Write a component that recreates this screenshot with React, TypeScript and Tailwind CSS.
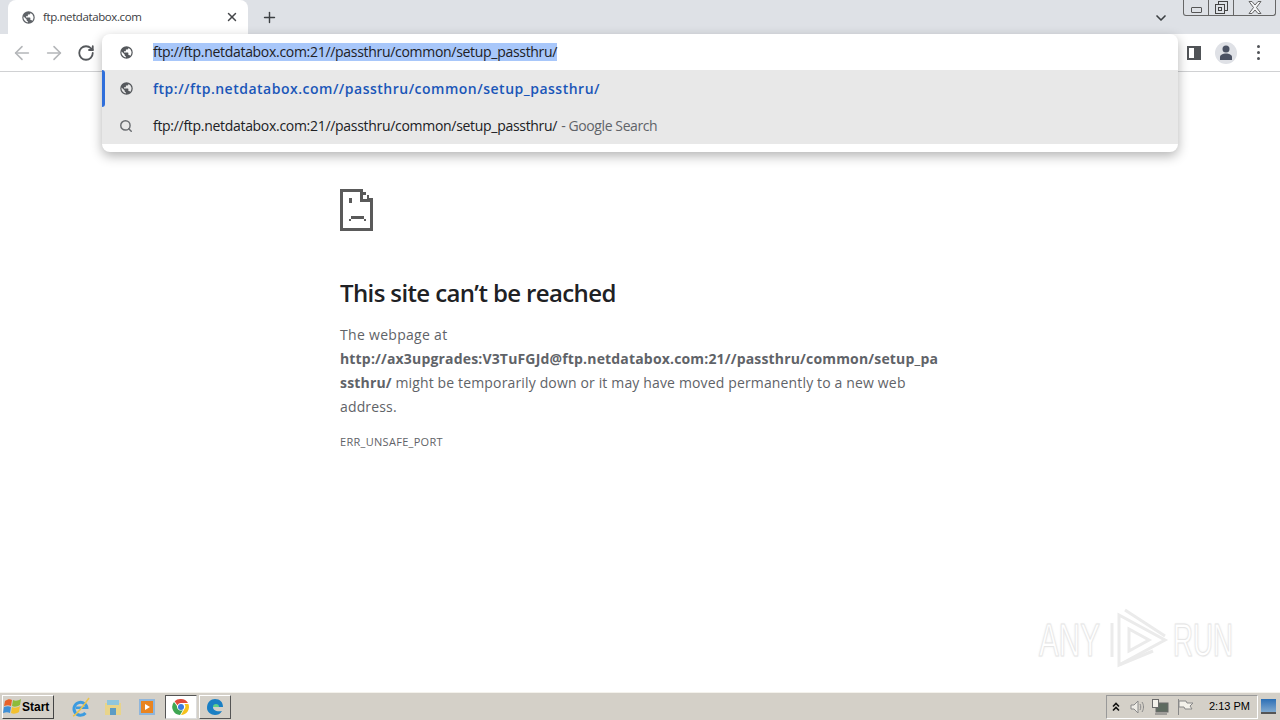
import { ArrowLeft, ArrowRight, RotateCw, Plus, X, ChevronDown, Search } from 'lucide-react';

function GlobeIcon({ className }: { className?: string }) {
  return (
    <svg viewBox="0 0 24 24" className={className} fill="currentColor">
      <path d="M12 2a10 10 0 1 0 0 20 10 10 0 0 0 0-20zm-1 17.900A8 8 0 0 1 4.200 10.200L9 15v1a2 2 0 0 0 2 2v1.900zm6.900-2.500A2 2 0 0 0 16 16h-1v-3a1 1 0 0 0-1-1H8v-2h2a1 1 0 0 0 1-1V7h2a2 2 0 0 0 2-2v-.4a8 8 0 0 1 2.900 12.800z" />
    </svg>
  );
}

function SadPage() {
  return (
    <svg width="33" height="42" viewBox="0 0 33 42" shapeRendering="crispEdges" fill="#5a5a5a">
      <path d="M0 0h20v3H3v36h27V13h3v29H0z" />
      <path d="M20 0h3v3h3v3h3v3h4v4H20zM23 6v4h4V6z" />
      <rect x="9" y="9" width="3" height="5" />
      <rect x="11" y="27" width="13" height="3" />
      <rect x="9" y="30" width="2" height="2" />
      <rect x="24" y="30" width="2" height="2" />
    </svg>
  );
}

function WindowsFlag() {
  return (
    <svg width="18" height="17" viewBox="0 0 18 17">
      <path d="M2 3c3-2 5-2 7-1L8 8C6 7 4 7 1 8z" fill="#e8622a" />
      <path d="M10 2c2 1 5 1 8-1l-1 6c-3 2-6 2-8 1z" fill="#8dbb3a" />
      <path d="M1 9c3-1 5-1 7 0l-1 6c-2-1-4-1-7 0z" fill="#3f8fd6" />
      <path d="M9 9c2 1 5 1 8-1l-1 6c-3 2-6 2-8 1z" fill="#f3c02f" />
    </svg>
  );
}

function TaskIcons() {
  return (
    <div className="flex items-center h-full">
      <svg width="20" height="22" viewBox="0 0 20 22" className="ml-[17px]">
        <path d="M16 13a6.500 6.500 0 1 0-1.500 4" fill="none" stroke="#3c9be0" strokeWidth="3" />
        <rect x="5" y="10.500" width="11" height="2.500" fill="#3c9be0" />
        <path d="M2 20C5 19 13 9 18 2" stroke="#e9c44c" strokeWidth="1.500" fill="none" />
      </svg>
      <svg width="18" height="18" viewBox="0 0 18 18" className="ml-[13px]">
        <rect x="1" y="5" width="16" height="12" fill="#e8d48a" />
        <rect x="3" y="2" width="12" height="5" fill="#8ec6de" />
        <rect x="6" y="10" width="6" height="7" fill="#5c9cc4" />
      </svg>
      <div className="ml-[17px] w-4 h-4 bg-[#8fb6dc] flex items-center justify-center">
        <div className="w-3 h-3 bg-[#e98420] flex items-center justify-center">
          <div className="w-0 h-0 border-y-[3px] border-y-transparent border-l-[5px] border-l-white" />
        </div>
      </div>
      <div className="ml-[10px] w-[32px] h-[24px] bg-white border border-t-[#555] border-l-[#555] border-r-[#ddd] border-b-[#ddd] flex items-center justify-center">
        <svg width="18" height="18" viewBox="0 0 18 18">
          <path d="M9 1a8 8 0 0 1 7 4H9a4 4 0 0 0-3.600 2.200L2.600 3.200A8 8 0 0 1 9 1z" fill="#e04a3a" />
          <path d="M16.400 6A8 8 0 0 1 9 17l3.400-6a4 4 0 0 0 0-5z" fill="#f6c21c" />
          <path d="M2 4a8 8 0 0 0 6 13l3-5a4 4 0 0 1-6-4z" fill="#3fa652" />
          <circle cx="9" cy="9" r="3" fill="#3a7be0" />
        </svg>
      </div>
      <div className="ml-[2px] w-[32px] h-[24px] bg-[#d4d0c8] border border-t-white border-l-white border-r-[#555] border-b-[#555] flex items-center justify-center">
        <svg width="18" height="18" viewBox="0 0 18 18">
          <path d="M1 10C1 4 5 1 9 1c5 0 8 3 8 8H7c0 3 3 5 9 4-2 3-4 4-7 4-4 0-8-3-8-7z" fill="#1a7fc4" />
          <path d="M7 9c0-2 1-3 3-3 2 0 3 1 3 3z" fill="#5fd08a" />
        </svg>
      </div>
    </div>
  );
}

function Tray() {
  return (
    <div className="ml-auto flex items-center h-full">
      <div className="h-[24px] w-[152px] flex items-center border border-t-[#999] border-l-[#999] border-r-white border-b-white">
        <svg width="8" height="10" viewBox="0 0 8 10" className="ml-[5px]" fill="none" stroke="#111" strokeWidth="1.600">
          <path d="M1 4.500L4 1.500l3 3M1 8.500L4 5.500l3 3" />
        </svg>
        <svg width="18" height="18" viewBox="0 0 18 18" className="ml-[9px]" fill="none" stroke="#8a8a8a">
          <path d="M2 7h3l4-4v12l-4-4H2z" fill="#eeece6" />
          <path d="M11 6c1 2 1 4 0 6M13 4c2 3 2 7 0 10" />
        </svg>
        <svg width="20" height="18" viewBox="0 0 20 18" className="ml-[3px]" fill="none" stroke="#6a6a6a">
          <rect x="6" y="5" width="12" height="9" fill="#5e6b60" />
          <rect x="2.500" y="1.500" width="6" height="8" fill="#f3f1ea" />
          <path d="M5 16h12" />
        </svg>
        <svg width="20" height="18" viewBox="0 0 20 18" className="ml-[6px]" fill="#f3f1ea" stroke="#888">
          <path d="M2.500 1v16" fill="none" />
          <path d="M3 3h7l1 2h6l-3 3 2 3h-7L8 9H3z" />
        </svg>
        <span className="ml-[13px] text-[11px] leading-none text-black font-['Liberation_Sans',sans-serif]">2:13 PM</span>
      </div>
      <div className="ml-[3px] mr-[4px] w-[15px] h-[15px] bg-gradient-to-b from-[#2a6fb5] to-[#7fa9cf] border-b-2 border-b-[#555]" />
    </div>
  );
}

function WindowControls() {
  return (
    <div className="flex h-[16px] w-[93px] mr-[4px] self-start bg-[#dee1e6] border border-t-0 border-[#666] rounded-b-[3px]">
      <div className="w-[25px] flex items-center justify-center border-r border-[#666]">
        <div className="w-[11px] h-[6px] mt-[4px] border border-[#555] rounded-[1px]" />
      </div>
      <div className="w-[25px] flex items-center justify-center border-r border-[#666]">
        <svg width="13" height="13" viewBox="0 0 13 13" fill="#dee1e6" stroke="#444">
          <rect x="3.500" y="0.500" width="9" height="9" />
          <rect x="0.500" y="3.500" width="9" height="9" />
          <rect x="3.500" y="6.500" width="3" height="3" />
        </svg>
      </div>
      <div className="flex-1 flex items-center justify-center">
        <svg width="14" height="13" viewBox="0 0 14 13" fill="#f4f5f7" stroke="#666">
          <path d="M1 .500h3L7 4l3-3.500h3L8.500 6.500 13 12.500h-3L7 9l-3 3.500H1L5.500 6.500z" />
        </svg>
      </div>
    </div>
  );
}

function Watermark() {
  const letters = "text-[47px] leading-none text-white font-['Liberation_Sans',sans-serif] [-webkit-text-stroke:1px_#e6e6e6] [text-shadow:0_0_3px_#e4e4e4] origin-left w-[70px]";
  return (
    <div className="absolute left-[1039px] top-[607px] flex items-center select-none">
      <span className={`${letters} scale-x-[0.63]`}>ANY</span>
      <svg width="60" height="64" viewBox="0 0 60 64" fill="none" stroke="#ebebeb" strokeWidth="3">
        <path d="M3 16v34M10 8v50l46-25zM20 22v22l20-11z" />
        <path d="M16 3l40 26M10 58l34-14" />
      </svg>
      <span className={`${letters} scale-x-[0.59] ml-[4px]`}>RUN</span>
    </div>
  );
}

export default function App() {
  return (
    <div className="relative flex flex-col h-[720px] w-[1280px] overflow-hidden bg-white font-['Open_Sans','Noto_Sans',sans-serif]">
      {/* tab strip */}
      <div className="flex h-[34px] items-center bg-[#dee1e6] shrink-0">
        <div className="ml-[8px] mt-auto flex h-[34px] w-[240px] items-center rounded-t-lg bg-white pl-[13px] pr-[9px]">
          <GlobeIcon className="h-[15px] w-[15px] text-[#5f6368]" />
          <span className="ml-[7px] text-[11.5px] tracking-[-0.4px] text-[#3c4043]">ftp.netdatabox.com</span>
          <X size={14} strokeWidth={2.5} className="ml-auto text-[#45474a]" />
        </div>
        <Plus size={17} strokeWidth={2} className="ml-[13px] text-[#3c4043]" />
        <ChevronDown size={16} strokeWidth={2.5} className="ml-auto mr-[14px] mt-[1px] text-[#3c4043]" />
        <WindowControls />
      </div>

      {/* toolbar */}
      <div className="flex h-[38px] items-center border-b border-[#d0d1d3] shrink-0">
        <ArrowLeft size={22} strokeWidth={1.700} className="ml-[11px] text-[#b4b6b9]" />
        <ArrowRight size={22} strokeWidth={1.700} className="ml-[10px] text-[#b4b6b9]" />
        <RotateCw size={18} strokeWidth={2.400} className="ml-[12px] text-[#55585c]" />
        <div className="ml-auto flex items-center mr-[20px]">
          <div className="flex h-[14px] w-[14px] justify-end border-2 border-[#505357] bg-white">
            <div className="w-[5px] bg-[#505357]" />
          </div>
          <div className="ml-[14px] flex h-[22px] w-[22px] items-center justify-center overflow-hidden rounded-full bg-[#dfe1e6]">
            <svg width="14" height="15" viewBox="0 0 14 15" fill="#4b5263">
              <circle cx="7" cy="4" r="3.500" />
              <path d="M1 15v-3c0-2 3-3.500 6-3.500s6 1.500 6 3.500v3z" />
            </svg>
          </div>
          <div className="ml-[20px] flex flex-col gap-[3px]">
            <div className="h-[3px] w-[3px] rounded-full bg-[#505357]" />
            <div className="h-[3px] w-[3px] rounded-full bg-[#505357]" />
            <div className="h-[3px] w-[3px] rounded-full bg-[#505357]" />
          </div>
        </div>
      </div>

      {/* error page */}
      <main className="flex-1 pl-[340px] pt-[117px]">
        <div className="h-[42px]">
          <SadPage />
        </div>
        <h1 className="mt-[42px] w-[600px] text-[24px] leading-[40px] font-semibold tracking-[-0.62px] text-[#202124]">
          This site can’t be reached
        </h1>
        <p className="mt-[10px] w-[600px] text-[14px] leading-[24px] tracking-[0.3px] text-[#5f6368]">The webpage at</p>
        <p className="w-[600px] break-all text-[14px] leading-[24px] text-[#5f6368]">
          <strong className="font-bold tracking-[0.17px]">
            http://ax3upgrades:V3TuFGJd@ftp.netdatabox.com:21//passthru/common/setup_passthru/
          </strong>{' '}
          <span className="break-normal tracking-[0.15px]">might be temporarily down or it may have moved permanently to a new web address.</span>
        </p>
        <p className="mt-[15px] text-[11px] leading-[16px] tracking-[0.3px] text-[#5f6368]">ERR_UNSAFE_PORT</p>
      </main>

      {/* taskbar */}
      <div className="flex h-[28px] shrink-0 items-center border-t border-t-[#f4f2ec] bg-[#d4d0c8]">
        <div className="ml-[2px] flex h-[24px] w-[52px] items-center border border-t-white border-l-white border-r-[#444] border-b-[#444]">
          <WindowsFlag />
          <span className="ml-[1px] text-[12px] font-bold leading-none text-black font-['Liberation_Sans',sans-serif]">Start</span>
        </div>
        <TaskIcons />
        <Tray />
      </div>

      <Watermark />

      {/* omnibox popup */}
      <div className="absolute left-[102px] top-[34px] w-[1076px] h-[118px] rounded-lg bg-white shadow-[0_4px_12px_rgba(0,0,0,0.3)] text-[14px] text-[#202124]">
        <div className="flex h-[36px] items-center">
          <GlobeIcon className="ml-[17px] h-[15px] w-[15px] text-[#55585c]" />
          <span className="ml-[19px] bg-[#a8c7fa] leading-[18px] tracking-[-0.3px]">ftp://ftp.netdatabox.com:21//passthru/common/setup_passthru/</span>
        </div>
        <div className="relative flex h-[37px] items-center bg-[#e8e8e8]">
          <div className="absolute left-0 top-0 h-full w-[3px] rounded-r-[3px] bg-[#2f6fdb]" />
          <GlobeIcon className="ml-[17px] h-[15px] w-[15px] text-[#55585c]" />
          <span className="ml-[19px] font-semibold tracking-[0.5px] text-[#1a56b8]">ftp://ftp.netdatabox.com//passthru/common/setup_passthru/</span>
        </div>
        <div className="flex h-[37px] items-center bg-[#e8e8e8]">
          <Search size={14} strokeWidth={2.500} className="ml-[17px] text-[#6a6d71]" />
          <span className="ml-[20px] tracking-[-0.3px]">ftp://ftp.netdatabox.com:21//passthru/common/setup_passthru/</span>
          <span className="ml-[4px] tracking-[-0.4px] text-[#5f6368]">- Google Search</span>
        </div>
      </div>
    </div>
  );
}
